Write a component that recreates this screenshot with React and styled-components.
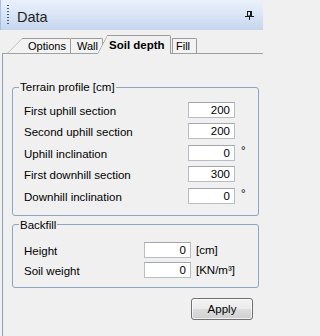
import React from 'react';
import styled, { createGlobalStyle } from 'styled-components';

const Global = createGlobalStyle`
  html, body { margin: 0; padding: 0; background: #f0f0f0; }
  #root { width: 263px; height: 336px; overflow: hidden; }
  * { box-sizing: border-box; }
`;

const Window = styled.div`
  width: 263px;
  height: 336px;
  display: flex;
  flex-direction: column;
  background: #f0f0f0;
  font-family: "Liberation Sans", Tahoma, Arial, sans-serif;
  color: #000;
`;

const Header = styled.div`
  height: 30px;
  flex: none;
  display: flex;
  align-items: center;
  padding: 0 9px 0 6px;
  border-left: 1px solid #a9c0e2;
  background: linear-gradient(to bottom, #eaf1fb 0%, #dbe6f6 45%, #c6d6ee 100%);
`;

const Grip = styled.span`
  width: 2px;
  height: 20px;
  background: repeating-linear-gradient(to bottom, #3f5f8c 0 1px, transparent 1px 3px);
`;

const Title = styled.span`
  margin-left: 8px;
  padding-top: 4px;
  font-size: 14.5px;
  line-height: 16px;
  color: #1e1e1e;
`;

const Pin = styled.svg`
  margin-left: auto;
  width: 9px;
  height: 9px;
  display: block;
`;

const TabBar = styled.div`
  height: 23px;
  flex: none;
  display: flex;
  align-items: flex-end;
  padding-left: 7px;
  position: relative;
  z-index: 1;
`;

const tabBorder = '#9c9c9c';

const Tab = styled.div`
  position: relative;
  isolation: isolate;
  flex: none;
  width: ${p => p.$w}px;
  height: ${p => (p.$selected ? 19 : 15)}px;
  margin-bottom: ${p => (p.$selected ? -1 : 0)}px;
  margin-left: ${p => p.$ml || 0}px;
  padding-left: ${p => p.$slant + p.$pl}px;
  display: flex;
  align-items: center;
  font-size: ${p => (p.$selected ? '11.5px' : '11px')};
  font-weight: ${p => (p.$selected ? 700 : 400)};
  white-space: nowrap;
  z-index: ${p => (p.$selected ? 2 : 1)};

  &::before {
    content: '';
    display: ${p => (p.$slant ? 'block' : 'none')};
    position: absolute;
    z-index: -1;
    left: 0;
    top: 0;
    bottom: 0;
    width: ${p => p.$slant + 3}px;
    border-left: 1px solid ${tabBorder};
    border-top: 1px solid ${tabBorder};
    border-top-left-radius: 2px;
    background: ${p => (p.$selected ? '#f0f0f0' : '#f3f3f3')};
    transform-origin: bottom left;
    transform: skewX(${p => -Math.atan(p.$slant / (p.$selected ? 19 : 15)) * 180 / Math.PI}deg);
  }

  &::after {
    content: '';
    position: absolute;
    z-index: -1;
    left: ${p => p.$slant}px;
    right: 0;
    top: 0;
    bottom: 0;
    border-top: 1px solid ${tabBorder};
    border-right: 1px solid ${tabBorder};
    border-left: ${p => (p.$edge ? `1px solid ${tabBorder}` : 'none')};
    border-top-right-radius: 2px;
    background: ${p => (p.$selected ? '#f0f0f0' : '#f3f3f3')};
  }
`;

const Panel = styled.div`
  flex: 1;
  margin-left: 2px;
  border-left: 1px solid #8ea2bf;
  border-top: 1px solid #a0a0a0;
  padding: 26px 4px 0 9px;
  display: flex;
  flex-direction: column;
`;

const Group = styled.fieldset`
  margin: ${p => p.$mt || 0}px 0 0 0;
  padding: 0;
  min-width: 0;
  border: 1px solid #8ea5c4;
  border-radius: 3px;
`;

const Legend = styled.legend`
  margin-left: 6px;
  padding: 0 1px;
  font-size: 11.5px;
  line-height: 14px;
`;

const FieldGrid = styled.div`
  display: grid;
  grid-template-columns: ${p => p.$cols};
  row-gap: ${p => p.$gap}px;
  padding: ${p => p.$pt}px 0 ${p => p.$pb}px 11px;
  align-items: start;
`;

const Label = styled.span`
  align-self: end;
  font-size: 11.5px;
  line-height: 14px;
  white-space: nowrap;
`;

const NumberBox = styled.input`
  width: 47px;
  height: 16px;
  margin: 0;
  padding: 0 4px 0 0;
  border: 1px solid #b9bcc2;
  border-top-color: #a3a6ad;
  background: #fff;
  font-family: inherit;
  font-size: 11.5px;
  line-height: 14px;
  color: #000;
  text-align: right;
  outline: none;
`;

const Degree = styled.span`
  align-self: start;
  padding-left: 6px;
  font-size: 11.5px;
  line-height: 11.5px;
`;

const Unit = styled.span`
  align-self: center;
  padding-left: 5px;
  font-size: 11.5px;
  line-height: 14px;
  white-space: nowrap;
`;

const ButtonRow = styled.div`
  display: flex;
  justify-content: flex-end;
  padding: 10px 6px 0 0;
`;

const Button = styled.button`
  width: 62px;
  height: 22px;
  border: 1px solid #707070;
  border-radius: 3px;
  background: linear-gradient(to bottom, #f3f3f3 0%, #ebebeb 50%, #dddddd 51%, #cfcfcf 100%);
  box-shadow: inset 0 0 0 1px rgba(255, 255, 255, 0.7);
  font-family: inherit;
  font-size: 11.5px;
  color: #000;
  padding: 0;
`;

const terrain = [
  { label: 'First uphill section', value: '200' },
  { label: 'Second uphill section', value: '200' },
  { label: 'Uphill inclination', value: '0', unit: '°' },
  { label: 'First downhill section', value: '300' },
  { label: 'Downhill inclination', value: '0', unit: '°' },
];

const backfill = [
  { label: 'Height', value: '0', unit: '[cm]' },
  { label: 'Soil weight', value: '0', unit: '[KN/m³]' },
];

export default function App() {
  return (
    <Window>
      <Global />
      <Header>
        <Grip />
        <Title>Data</Title>
        <Pin viewBox="0 0 9 9">
          <rect x="2.5" y="0.5" width="4" height="4.5" fill="none" stroke="#1a1a1a" strokeWidth="1" />
          <rect x="5" y="0" width="2" height="5" fill="#1a1a1a" />
          <rect x="0" y="5" width="9" height="1" fill="#1a1a1a" />
          <rect x="4" y="6" width="1" height="3" fill="#1a1a1a" />
        </Pin>
      </Header>
      <TabBar>
        <Tab $w={64} $slant={15} $pl={6}>Options</Tab>
        <Tab $w={32} $slant={0} $pl={6}>Wall</Tab>
        <Tab $w={74} $slant={10} $pl={2} $ml={-6} $selected>Soil depth</Tab>
        <Tab $w={25} $slant={0} $pl={4} $ml={1} $edge>Fill</Tab>
      </TabBar>
      <Panel>
        <Group>
          <Legend>Terrain profile [cm]</Legend>
          <FieldGrid $cols="1fr 47px 23px" $gap={5.5} $pt={7.5} $pb={11}>
            {terrain.map(r => (
              <React.Fragment key={r.label}>
                <Label>{r.label}</Label>
                <NumberBox value={r.value} readOnly />
                <Degree>{r.unit || ''}</Degree>
              </React.Fragment>
            ))}
          </FieldGrid>
        </Group>
        <Group $mt={2}>
          <Legend>Backfill</Legend>
          <FieldGrid $cols="120px 47px 1fr" $gap={4} $pt={10} $pb={9}>
            {backfill.map(r => (
              <React.Fragment key={r.label}>
                <Label>{r.label}</Label>
                <NumberBox value={r.value} readOnly />
                <Unit>{r.unit}</Unit>
              </React.Fragment>
            ))}
          </FieldGrid>
        </Group>
        <ButtonRow>
          <Button type="button">Apply</Button>
        </ButtonRow>
      </Panel>
    </Window>
  );
}
